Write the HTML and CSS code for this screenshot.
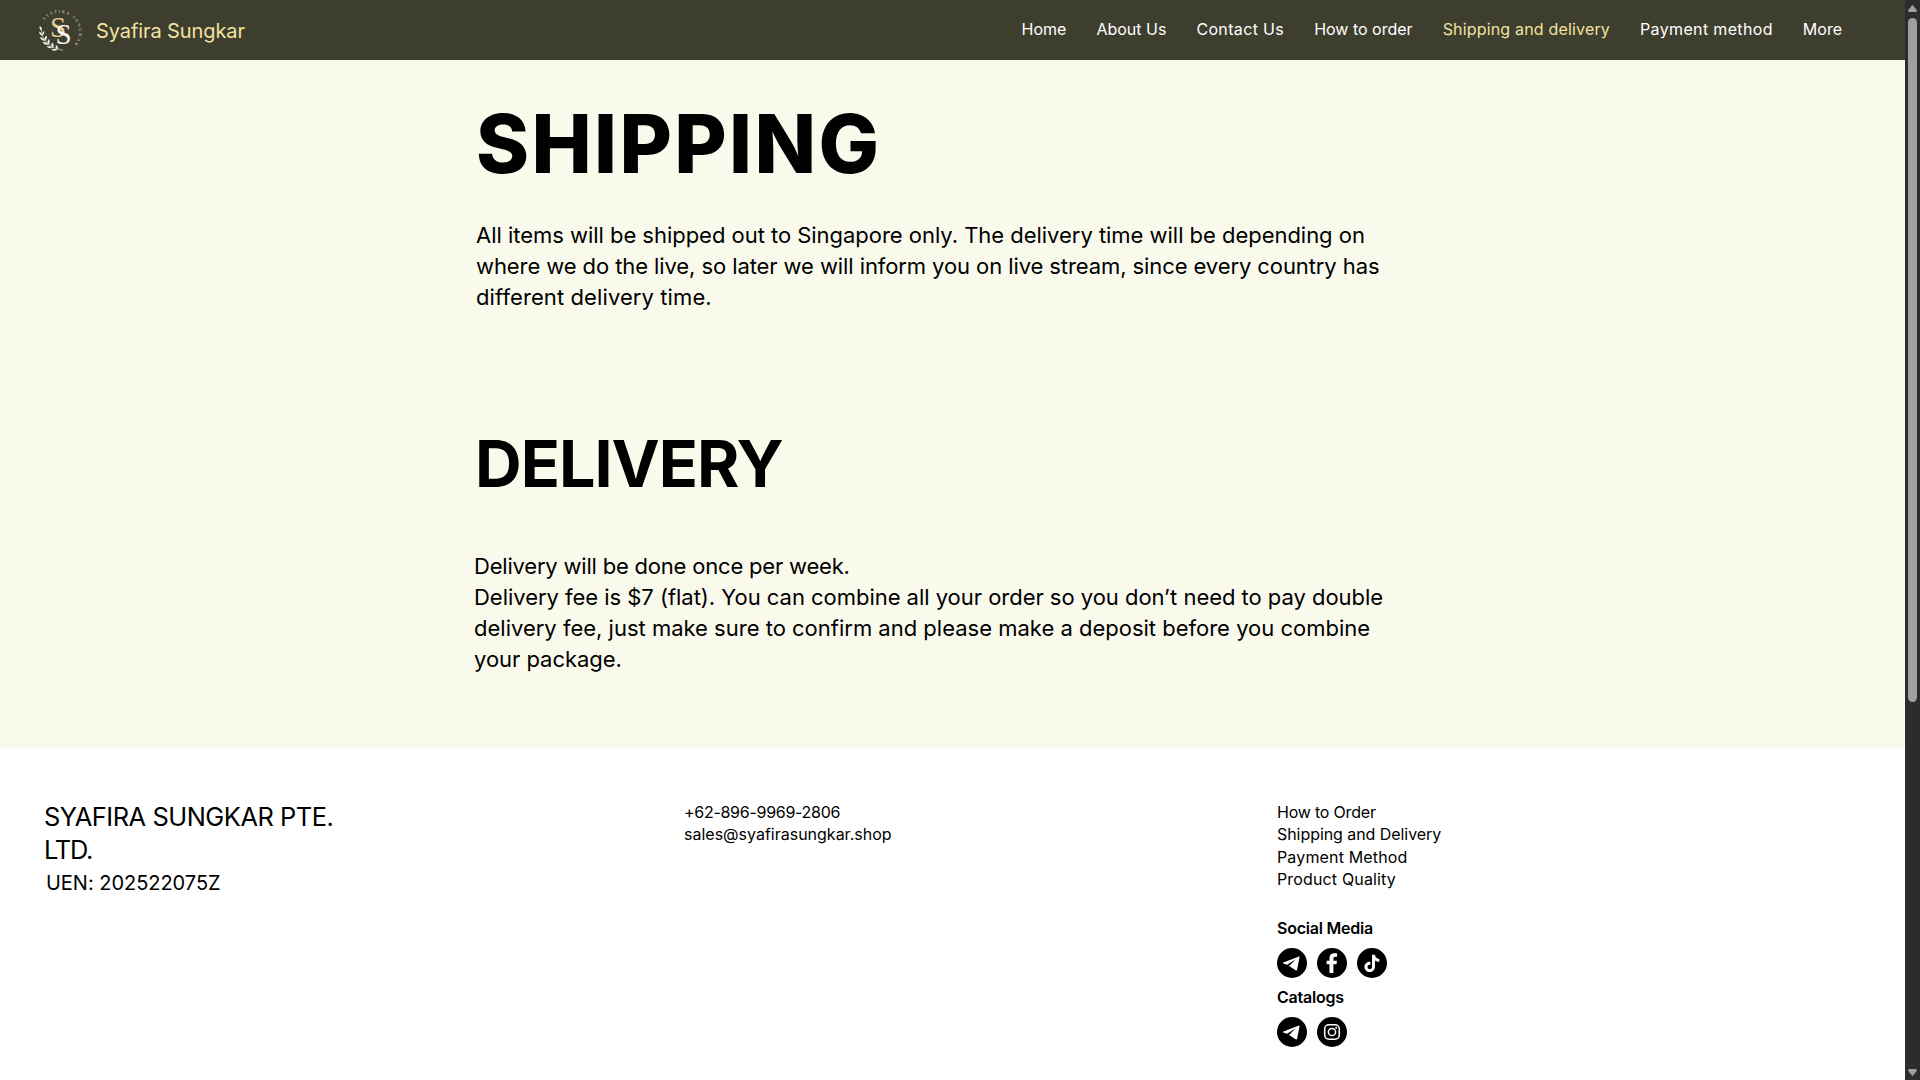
FILE: index.html
```
<!DOCTYPE html>
<html lang="en">
<head>
<meta charset="utf-8">
<title>Shipping and delivery | Syafira Sungkar</title>
<link rel="stylesheet" href="styles.css">
</head>
<body>
<svg class="defs" width="0" height="0" aria-hidden="true">
  <symbol id="telegram" viewBox="0 0 30 30">
    <circle cx="15" cy="15" r="15" fill="#000"/>
    <path fill="#fff" d="M22 8.6 6.4 14.5c-.7.3-.7.9 0 1.1l3.7 1.1 8.7-5.4-6.7 6.7 6.5 4.3c.7.4 1.3.2 1.5-.6l2.4-12.2c.2-.8-.1-1.1-.5-.9z"/>
  </symbol>
  <symbol id="facebook" viewBox="0 0 30 30">
    <circle cx="15" cy="15" r="15" fill="#000"/>
    <path fill="#fff" d="M12.5 25v-8.800H9.600v-3.500h2.900v-2.600c0-3.100 1.800-4.800 4.600-4.800h3v3.400h-1.800c-1.500 0-1.900.9-1.900 1.800v2.200h3.600l-.5 3.500h-3.100V25z"/>
  </symbol>
  <symbol id="tiktok" viewBox="0 0 30 30">
    <circle cx="15" cy="15" r="15" fill="#000"/>
    <path fill="#fff" d="M15 6.800h2.900c.2 2.300 1.700 3.800 4.400 4.100v2.900c-1.700 0-3.100-.5-4.300-1.400v5.900c0 3.600-2.500 5.800-5.300 5.800-3 0-5.200-2.300-5.200-5.100 0-3.200 2.700-5.500 5.900-5.100v3c-1.600-.4-2.900.6-2.900 2.100 0 1.300 1 2.200 2.200 2.200 1.400 0 2.300-1 2.300-2.500z"/>
  </symbol>
  <symbol id="instagram" viewBox="0 0 30 30">
    <circle cx="15" cy="15" r="15" fill="#000"/>
    <g fill="none" stroke="#fff" stroke-width="1.500">
      <rect x="7.700" y="7.700" width="14.600" height="14.600" rx="4.200"/>
      <circle cx="15" cy="15" r="3.600"/>
    </g>
    <circle cx="19.200" cy="10.800" r="1" fill="#fff"/>
  </symbol>
</svg>

<div class="page">
  <header class="topbar">
    <a class="brand">
      <svg class="logo" viewBox="0 0 44 44" width="44" height="44">
        <defs>
          <path id="ring" d="M5.300 12.400A18.300 18.300 0 1 1 36 35.500"/>
          <linearGradient id="gold" x1="0" y1="0" x2="1" y2="1">
            <stop offset="0" stop-color="#d9bd7c"/><stop offset="1" stop-color="#f6e3b4"/>
          </linearGradient>
        </defs>
        <text class="ring-text"><textPath href="#ring" textLength="61">SYAFIRA SUNGKAR</textPath></text>
        <text class="mono" x="11" y="28.500" fill="url(#gold)">S</text>
        <text class="mono" x="16.500" y="35.500" fill="#fbf8ef">S</text>
        <path d="M2 19Q2 38 24 42.500" fill="none" stroke="#f0eee4" stroke-width=".6"/>
        <g fill="#f0eee4">
          <path d="M2.200 23Q-.5 20 1 18Q3.500 20 2.200 23z"/>
          <path d="M3 28Q-.2 26.500.2 23.500Q3.500 25 3 28zM3 28Q3 24 5.200 23Q6 26 3 28z"/>
          <path d="M5.500 33Q1.500 32 1 29Q5 29.500 5.500 33zM5.500 33Q5 29 7.500 27.500Q9 31 5.500 33z"/>
          <path d="M9 37Q5 37 3.500 34Q8 33.500 9 37zM9 37Q7.500 33 10 31Q12 34.500 9 37z"/>
          <path d="M13.500 40Q9.500 41 7.500 38.500Q11.500 37 13.500 40zM13.500 40Q11.500 36.500 13.300 34.500Q16 37.500 13.500 40z"/>
          <path d="M18.500 41.800Q15 43.500 12.500 41.800Q15.500 39.800 18.500 41.800zM18.500 41.800Q16 39 17 37Q20 39.200 18.500 41.800z"/>
        </g>
      </svg>
      <span class="brand-name">Syafira Sungkar</span>
    </a>
    <nav class="menu">
      <a>Home</a>
      <a>About Us</a>
      <a class="wide">Contact Us</a>
      <a>How to order</a>
      <a class="current">Shipping and delivery</a>
      <a class="wide">Payment method</a>
      <a>More</a>
    </nav>
  </header>

  <main class="content">
    <h1>SHIPPING</h1>
    <p class="copy shipping-copy">
      <span>All items will be shipped out to Singapore only. The delivery time will be depending on</span>
      <span class="tight">where we do the live, so later we will inform you on live stream, since every country has</span>
      <span class="loose">different delivery time.</span>
    </p>
    <h2>DELIVERY</h2>
    <p class="copy delivery-copy">
      <span class="tighter">Delivery will be done once per week.</span>
      <span>Delivery fee is $7 (flat). You can combine all your order so you don’t need to pay double</span>
      <span class="even">delivery fee, just make sure to confirm and please make a deposit before you combine</span>
      <span>your package.</span>
    </p>
  </main>

  <footer class="footer">
    <div class="company">
      <div class="company-name">SYAFIRA SUNGKAR PTE.<br><span class="suffix">LTD.</span></div>
      <div class="uen">UEN: 202522075Z</div>
    </div>
    <div class="contact">
      <div class="phone">+62-896-9969-2806</div>
      <div>sales@syafirasungkar.shop</div>
    </div>
    <div class="links">
      <a class="snug">How to Order</a>
      <a>Shipping and Delivery</a>
      <a class="airy">Payment Method</a>
      <a class="airy">Product Quality</a>
      <h3 class="social-title">Social Media</h3>
      <div class="icons">
        <svg><use href="#telegram"/></svg>
        <svg><use href="#facebook"/></svg>
        <svg><use href="#tiktok"/></svg>
      </div>
      <h3 class="catalog-title">Catalogs</h3>
      <div class="icons">
        <svg><use href="#telegram"/></svg>
        <svg><use href="#instagram"/></svg>
      </div>
    </div>
  </footer>
</div>

<div class="scrollbar">
  <svg width="9" height="7" viewBox="0 0 9 7"><path d="M4 .3h1L9 5.500 8.300 7H.7L0 5.500z" fill="#9f9f9f"/></svg>
  <div class="thumb"></div>
  <svg class="down" width="9" height="7" viewBox="0 0 9 7"><path d="M4 6.700h1L9 1.500 8.300 0H.7L0 1.500z" fill="#9f9f9f"/></svg>
</div>
</body>
</html>
```

FILE: styles.css
```
* { box-sizing: border-box; }
body {
  margin: 0;
  display: flex;
  height: 1080px;
  overflow: hidden;
  background: #fff;
  color: #000;
  font-family: Inter, "Liberation Sans", sans-serif;
  font-size: 16px;
}
h1, h2, h3, p { margin: 0; }
.defs { position: absolute; }
.page { width: 1905px; display: flex; flex-direction: column; }

.topbar {
  height: 60px;
  padding: 0 63px 0 39px;
  display: flex;
  align-items: center;
  justify-content: space-between;
  background: #3e3e2f;
}
.brand { display: flex; align-items: center; gap: 13px; color: #f2e2a0; }
.brand-name { padding-top: 1px; font-size: 20px; letter-spacing: -.1px; }
.logo { display: block; }
.ring-text { font: 4.300px "Liberation Serif", serif; fill: #d8d5c4; }
.mono { font: 29px "Liberation Serif", serif; }
.menu { display: flex; gap: 30px; padding-bottom: 2px; color: #fff; white-space: nowrap; }
.menu .wide { letter-spacing: .35px; }
.menu .current { color: #f2e2a0; letter-spacing: .175px; }

.content { height: 688px; padding: 42px 0 0 476px; background: #f9f9ec; }
h1 { font-size: 80.500px; line-height: 84px; font-weight: 800; letter-spacing: 2.350px; }
h2 { margin: 118px 0 0 -1px; font-size: 64.600px; line-height: 66px; font-weight: 700; letter-spacing: -1px; }
.copy { font-size: 22px; line-height: 31px; letter-spacing: -.03px; white-space: nowrap; }
.copy span { display: block; }
.copy .tight { letter-spacing: -.09px; }
.copy .tighter { letter-spacing: -.2px; }
.copy .loose { letter-spacing: .1px; }
.copy .even { letter-spacing: 0; }
.shipping-copy { margin: 34px 0 0; }
.delivery-copy { margin: 54px 0 0 -2px; }

.footer {
  flex: 1;
  display: grid;
  grid-template-columns: 639px 593px 1fr;
  padding: 52px 0 0 45px;
}
.company-name { margin-left: -1px; font-size: 25.400px; line-height: 33px; letter-spacing: -.45px; }
.company-name .suffix { letter-spacing: -1.200px; }
.uen { padding: 1px 0 0 1px; font-size: 20px; line-height: 33px; letter-spacing: -.03px; }
.contact, .links { padding-top: 1px; line-height: 22.400px; }
.phone { letter-spacing: -.28px; }
.links a { display: block; letter-spacing: -.06px; }
.links .snug { letter-spacing: -.2px; }
.links .airy { letter-spacing: .15px; }
.links h3 { font-size: 16px; line-height: 22px; font-weight: 600; letter-spacing: -.22px; }
.social-title { margin-top: 26px; }
.catalog-title { margin-top: 8px; }
.icons { display: flex; gap: 10px; margin-top: 9px; }
.icons svg { width: 30px; height: 30px; }

.scrollbar {
  width: 15px;
  padding: 5px 3px 4px;
  display: flex;
  flex-direction: column;
  background: #2c2c2c;
}
.thumb { width: 9px; height: 684px; margin-top: 6px; border-radius: 5px; background: #9f9f9f; }
.down { margin-top: auto; }
```
